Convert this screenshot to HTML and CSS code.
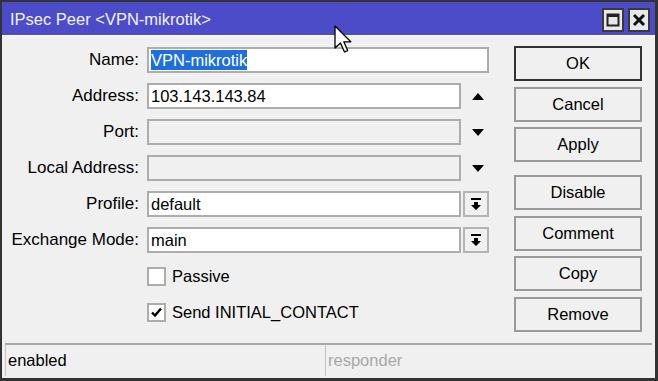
FILE: index.html
```html
<!DOCTYPE html>
<html lang="en">
<head>
    <meta charset="UTF-8">
    <title>IPsec Peer &lt;VPN-mikrotik&gt;</title>
    <link rel="stylesheet" href="styles.css">
</head>
<body>
    <div class="window">
        <div class="titlebar">
            <span class="title">IPsec Peer &lt;VPN-mikrotik&gt;</span>
            <div class="winbtns">
                <span class="winbtn">
                    <svg width="14" height="14" viewBox="0 0 14 14"><rect x="1.5" y="1.5" width="11" height="11" fill="none" stroke="#222" stroke-width="2"/><rect x="1" y="1" width="12" height="3" fill="#222"/></svg>
                </span>
                <span class="winbtn">
                    <svg width="14" height="14" viewBox="0 0 14 14"><path d="M2 2 L12 12 M12 2 L2 12" stroke="#111" stroke-width="3"/></svg>
                </span>
            </div>
        </div>

        <div class="content">
            <div class="form">
                <label>Name:</label>
                <div class="field wide"><span class="sel">VPN-mikrotik</span></div>

                <label>Address:</label>
                <div class="field">103.143.143.84</div>
                <span class="tri up"></span>

                <label>Port:</label>
                <div class="field disabled"></div>
                <span class="tri down"></span>

                <label>Local Address:</label>
                <div class="field disabled"></div>
                <span class="tri down"></span>

                <label>Profile:</label>
                <div class="field">default</div>
                <span class="dd"><svg width="12" height="14" viewBox="0 0 12 14"><rect x="1" y="1" width="10" height="2" fill="#000"/><path d="M4 5 H8 V8 H11 L6 13 L1 8 H4 Z" fill="#000"/></svg></span>

                <label>Exchange Mode:</label>
                <div class="field">main</div>
                <span class="dd"><svg width="12" height="14" viewBox="0 0 12 14"><rect x="1" y="1" width="10" height="2" fill="#000"/><path d="M4 5 H8 V8 H11 L6 13 L1 8 H4 Z" fill="#000"/></svg></span>

                <span></span>
                <div class="check"><span class="box"></span>Passive</div>

                <span></span>
                <div class="check"><span class="box"><svg width="15" height="15" viewBox="0 0 15 15"><path d="M3 7.5 L6 10.5 L12 3.5" fill="none" stroke="#000" stroke-width="2.4"/></svg></span>Send INITIAL_CONTACT</div>
            </div>

            <div class="buttons">
                <div class="btn default">OK</div>
                <div class="btn">Cancel</div>
                <div class="btn">Apply</div>
                <div class="btn sep">Disable</div>
                <div class="btn">Comment</div>
                <div class="btn">Copy</div>
                <div class="btn">Remove</div>
            </div>
        </div>

        <div class="statusbar">
            <div class="status">enabled</div>
            <div class="status dim">responder</div>
        </div>

        <!-- mouse pointer over the title bar -->
        <svg class="cursor" width="22" height="30" viewBox="0 0 22 30"><path d="M1 1 L1 23 L6.5 18 L10.5 27 L13.7 25.6 L9.8 16.8 L16.8 16.8 Z" fill="#fff" stroke="#000" stroke-width="1.3" stroke-linejoin="round"/></svg>
    </div>
</body>
</html>
```

FILE: styles.css
```css
body {
    margin: 0;
    background: #f0f0f0;
}
.window {
    position: relative;
    width: 658px;
    height: 381px;
    box-sizing: border-box;
    border: 2px solid #333;
    border-right-width: 3px;
    border-bottom-width: 3px;
    background: #f0f0f0;
    display: flex;
    flex-direction: column;
    font-family: "Liberation Sans", Arial, sans-serif;
    font-size: 16.5px;
    color: #000;
}
.titlebar {
    height: 33px;
    box-sizing: border-box;
    background: #4c4cc9;
    color: #f2f2fa;
    display: flex;
    align-items: center;
    padding: 2px 5px 0 8px;
    flex-shrink: 0;
}
.winbtns {
    margin-left: auto;
    display: flex;
    gap: 4px;
}
.winbtn {
    width: 22px;
    height: 24px;
    box-sizing: border-box;
    border: 2px solid #3a3a3a;
    background: #e8e8e8;
    display: flex;
    align-items: center;
    justify-content: center;
}
.content {
    height: 308px;
    box-sizing: border-box;
    border-top: 1px solid #fff;
    display: flex;
    flex-shrink: 0;
}
.form {
    display: grid;
    grid-template-columns: 142px 314px 28px;
    grid-auto-rows: 26px;
    row-gap: 10px;
    align-items: center;
    align-content: start;
    padding: 11px 0 0 3px;
}
.form label {
    text-align: right;
    padding-right: 8px;
    white-space: nowrap;
    font-size: 17px;
}
.field {
    height: 26px;
    box-sizing: border-box;
    border: 2px solid #adadad;
    background: #fff;
    padding: 0 2px;
    line-height: 22px;
}
.field.wide {
    grid-column: 2 / 4;
}
.field.disabled {
    background: #f0f0f0;
}
.sel {
    display: inline-block;
    background: #1e6fd9;
    color: #fff;
    line-height: 20px;
}
.tri {
    width: 0;
    height: 0;
    margin-left: 11px;
    border-left: 6px solid transparent;
    border-right: 6px solid transparent;
}
.tri.up {
    border-bottom: 7px solid #000;
}
.tri.down {
    border-top: 7px solid #000;
}
.dd {
    margin-left: 2px;
    width: 26px;
    height: 26px;
    box-sizing: border-box;
    border: 2px solid #b4b4b4;
    background: #f0f0f0;
    display: flex;
    align-items: center;
    justify-content: center;
}
.check {
    grid-column: 2 / 4;
    display: flex;
    align-items: center;
    gap: 6px;
}
.box {
    width: 19px;
    height: 19px;
    box-sizing: border-box;
    border: 2px solid #adadad;
    background: #fff;
    display: flex;
    align-items: center;
    justify-content: center;
}
.buttons {
    width: 128px;
    margin-left: 25px;
    padding-top: 10px;
    display: flex;
    flex-direction: column;
    gap: 5.5px;
}
.btn {
    height: 35px;
    box-sizing: border-box;
    border: 2px solid #9a9a9a;
    background: #f0f0f0;
    display: flex;
    align-items: center;
    justify-content: center;
}
.btn.default {
    border-color: #333;
}
.btn.sep {
    margin-top: 7.5px;
}
.statusbar {
    flex: 1;
    margin: 0 3px;
    border-top: 2px solid #a8a8a8;
    padding-bottom: 2px;
    display: flex;
    gap: 5px;
}
.status {
    width: 315px;
    box-sizing: border-box;
    border-left: 1px solid #c4c4c4;
    padding-left: 2px;
    line-height: 31px;
}
.status.dim {
    flex: 1;
    color: #a8a8a8;
}
.cursor {
    position: absolute;
    left: 332px;
    top: 23px;
}
```
